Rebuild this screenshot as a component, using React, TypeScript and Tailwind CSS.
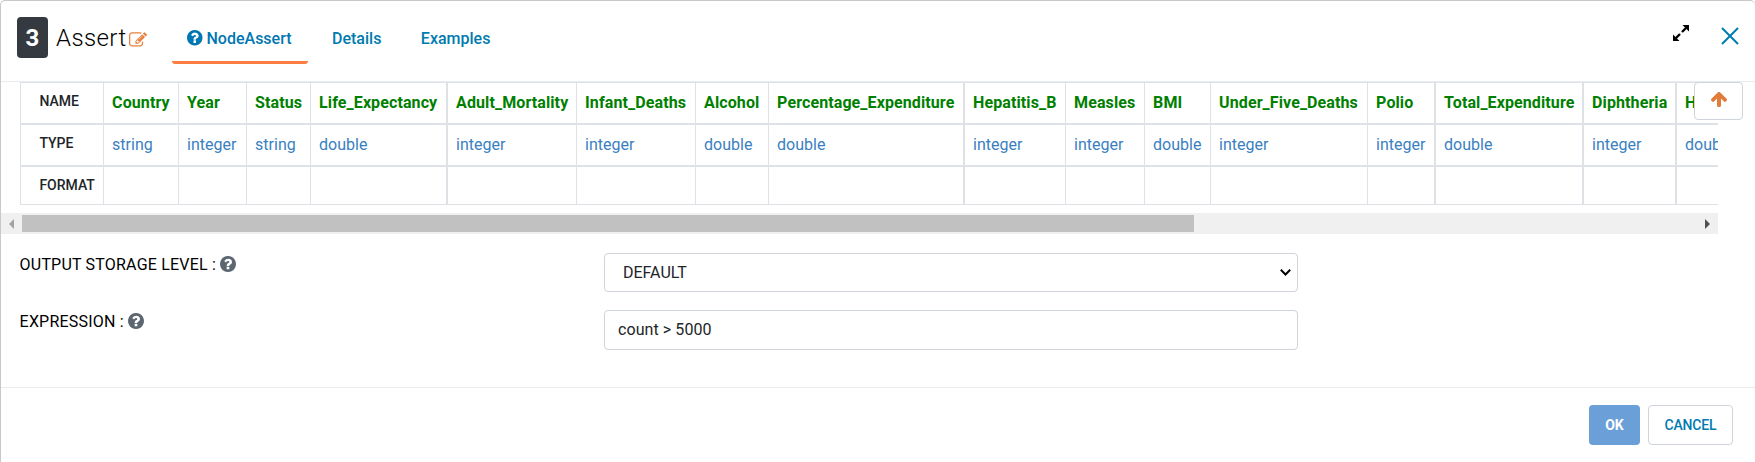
import React from "react";

type Column = { name: string; type: string; width: string };

const columns: Column[] = [
  { name: "Country", type: "string", width: "w-[75px] border-r" },
  { name: "Year", type: "integer", width: "w-[68px] border-r" },
  { name: "Status", type: "string", width: "w-[64px] border-r" },
  { name: "Life_Expectancy", type: "double", width: "w-[137px] border-r-2" },
  { name: "Adult_Mortality", type: "integer", width: "w-[129px] border-r" },
  { name: "Infant_Deaths", type: "integer", width: "w-[119px] border-r" },
  { name: "Alcohol", type: "double", width: "w-[73px] border-r" },
  { name: "Percentage_Expenditure", type: "double", width: "w-[196px] border-r-2" },
  { name: "Hepatitis_B", type: "integer", width: "w-[101px] border-r" },
  { name: "Measles", type: "integer", width: "w-[79px] border-r" },
  { name: "BMI", type: "double", width: "w-[66px] border-r" },
  { name: "Under_Five_Deaths", type: "integer", width: "w-[157px] border-r" },
  { name: "Polio", type: "integer", width: "w-[68px] border-r-2" },
  { name: "Total_Expenditure", type: "double", width: "w-[148px] border-r-2" },
  { name: "Diphtheria", type: "integer", width: "w-[93px] border-r-2" },
  { name: "HIV_AIDS", type: "double", width: "w-[90px] border-r" },
];

const rowLabel =
  "w-[84px] shrink-0 border-x border-[#dee2e6] pl-[18.4px] text-[14px] font-medium leading-5 text-[#212529]";
const cell = "shrink-0 border-[#dee2e6] pl-[8.1px] text-base leading-6 whitespace-nowrap";

function QuestionCircle({ className }: { className: string }) {
  return (
    <svg className={className} viewBox="128 128 1536 1536" fill="currentColor">
      <path d="M1024 1376v-192q0-14-9-23t-23-9h-192q-14 0-23 9t-9 23v192q0 14 9 23t23 9h192q14 0 23-9t9-23zm256-672q0-88-55.5-163t-138.5-116-170-41q-243 0-371 213-15 24 8 42l132 100q7 6 19 6 16 0 25-12 53-68 86-92 34-24 86-24 48 0 85.5 26t37.5 59q0 38-20 61t-68 45q-63 28-115.5 86.5t-52.5 125.5v36q0 14 9 23t23 9h192q14 0 23-9t9-23q0-19 21.5-49.5t54.5-49.5q32-18 49-28.5t46-35 44.5-48 28-60.5 12.5-81zm384 192q0 209-103 385.5t-279.5 279.5-385.5 103-385.5-103-279.5-279.5-103-385.5 103-385.5 279.5-279.5 385.5-103 385.5 103 279.5 279.5 103 385.5z" />
    </svg>
  );
}

function PencilSquare({ className }: { className: string }) {
  return (
    <svg className={className} viewBox="0 0 1792 1792" fill="currentColor">
      <path d="M888 1184l116-116-152-152-116 116v56h96v96h56zm440-720q-16-16-33 1l-350 350q-17 17-1 33t33-1l350-350q17-17 1-33zm80 594v190q0 119-84.5 203.5t-203.5 84.5h-832q-119 0-203.5-84.5t-84.5-203.5v-832q0-119 84.5-203.5t203.5-84.5h832q63 0 117 25 15 7 18 23 3 17-9 29l-49 49q-14 14-32 8-23-6-45-6h-832q-66 0-113 47t-47 113v832q0 66 47 113t113 47h832q66 0 113-47t47-113v-126q0-13 9-22l64-64q15-15 35-7t20 29zm-96-738l288 288-672 672h-288v-288zm444 132l-92 92-288-288 92-92q28-28 68-28t68 28l152 152q28 28 28 68t-28 68z" />
    </svg>
  );
}

function SchemaTable() {
  return (
    <div className="ml-5 w-[1698px] overflow-hidden">
      <div className="flex h-[43px] w-max border-t border-b-2 border-[#dee2e6]">
        <div className={`${rowLabel} pt-2`}>NAME</div>
        {columns.map((c) => (
          <div key={c.name} className={`${cell} ${c.width} pt-2 font-bold tracking-[0.1px] text-[#008000]`}>{c.name}</div>
        ))}
      </div>
      <div className="flex h-[42px] w-max border-b-2 border-[#dee2e6]">
        <div className={`${rowLabel} pt-2`}>TYPE</div>
        {columns.map((c) => (
          <div key={c.name} className={`${cell} ${c.width} pt-2 text-[#3a7fc1]`}>{c.type}</div>
        ))}
      </div>
      <div className="flex h-[38px] w-max border-b border-[#dee2e6]">
        <div className={`${rowLabel} pt-2`}>FORMAT</div>
        {columns.map((c) => (
          <div key={c.name} className={`${cell} ${c.width}`} />
        ))}
      </div>
    </div>
  );
}

function ScrollBar() {
  return (
    <div className="mt-2 flex h-[21px] w-[1717px] items-center justify-between bg-[#f0f0f0] pr-2">
      <div className="flex items-center">
        <svg className="ml-2 h-[10px] w-[5px]" viewBox="0 0 5 10"><path d="M5 0v10L0 5z" fill="#a3a3a3" /></svg>
        <div className="ml-2 h-[17px] w-[1172px] bg-[#c1c1c1]" />
      </div>
      <svg className="h-[10px] w-[5px]" viewBox="0 0 5 10"><path d="M0 0v10l5-5z" fill="#505050" /></svg>
    </div>
  );
}

function FieldLabel({ children }: { children: React.ReactNode }) {
  return (
    <div className="flex h-6 w-[584px] items-start pl-[0.6px] text-base leading-6 tracking-[0.2px] text-black">
      <span>{children}</span>
      <QuestionCircle className="mt-[3px] ml-1 size-4 text-[#5c6670]" />
    </div>
  );
}

export default function App() {
  return (
    <div className="h-[462px] w-full overflow-hidden rounded-t-[5px] border-t border-l border-[#c9c9c9] bg-white font-['Roboto',sans-serif] text-[#212529]">
      <header className="flex h-[81px] items-start border-b border-[#e9ecef]">
        <div className="mt-4 ml-4 flex h-[41px] w-[31px] items-center justify-center rounded bg-[#343a40] text-2xl font-bold text-white">3</div>
        <h1 className="mt-[21px] ml-2 w-[73px] text-2xl leading-8 font-light tracking-[0.4px] text-black">Assert</h1>
        <PencilSquare className="mt-[29.5px] size-[18px] text-[#e8803f]" />
        <nav className="ml-[25px] flex text-base leading-6 font-medium text-[#0077b3]">
          <a className="mt-[18px] flex h-[45px] w-[136px] items-start rounded-[3px] border-b-[3px] border-[#fd7e42] pt-2 pl-[15px]">
            <QuestionCircle className="mt-[3px] mr-1 size-[15.5px]" />NodeAssert
          </a>
          <a className="mt-[26px] ml-6 text-[#007bae]">Details</a>
          <a className="mt-[26px] ml-[39.5px] text-[#007bae]">Examples</a>
        </nav>
        <svg className="mt-6 mr-[32px] ml-auto size-4" viewBox="0 0 16 16" fill="none" stroke="#000" strokeWidth="2.4">
          <path d="M9 7l4-4M7 9l-4 4" /><path d="M9.5 0H16v6.5zM0 9.5V16h6.5z" fill="#000" stroke="none" />
        </svg>
        <svg className="mt-[26px] mr-[16px] size-[18px]" viewBox="0 0 18 18" fill="none" stroke="#007bb0" strokeWidth="2">
          <path d="M1 1l16 16M17 1L1 17" />
        </svg>
      </header>
      <main className="relative h-[305px]">
        <div className="-ml-px"><SchemaTable /></div>
        <ScrollBar />
        <button className="absolute top-0 left-[1693px] flex h-[38px] w-[49px] items-center justify-center rounded border border-[#ced4da] bg-white">
          <svg className="mb-1 h-[15px] w-4" viewBox="117 221 1558 1443" fill="#e07b39">
            <path d="M1675 971q0 51-37 90l-75 75q-38 38-91 38-54 0-90-38l-294-293v704q0 52-37.5 84.5t-90.5 32.5h-128q-53 0-90.5-32.5t-37.5-84.5v-704l-294 293q-36 38-90 38t-90-38l-75-75q-38-38-38-90 0-53 38-91l651-651q35-37 90-37 54 0 91 37l651 651q37 39 37 91z" />
          </svg>
        </button>
        <div className="ml-[18px] flex h-[57px] pt-[19px]">
          <FieldLabel>OUTPUT STORAGE LEVEL :</FieldLabel>
          <div className="ml-px flex h-[39px] w-[694px] items-center justify-between rounded border border-[#ced4da] pr-[6px] pl-[18px] text-base text-[#212529]">
            DEFAULT
            <svg className="h-[7px] w-[11px]" viewBox="0 0 11 7" fill="none" stroke="#000" strokeWidth="2"><path d="M.8.8l4.7 4.7L10.2.8" /></svg>
          </div>
        </div>
        <div className="ml-[18px] flex pt-[19px]">
          <FieldLabel>EXPRESSION :</FieldLabel>
          <input readOnly defaultValue="count > 5000" className="ml-px h-10 w-[694px] rounded border border-[#ced4da] px-[13px] pb-px text-base tracking-[0.08px] text-[#212529]" />
        </div>
      </main>
      <footer className="flex justify-end gap-2 border-t border-[#e9ecef] pt-[17px] pr-[22px] text-[14px]">
        <button className="h-10 w-[51px] rounded bg-[#6a9fd8] font-bold text-white">OK</button>
        <button className="h-10 w-[85px] rounded border border-[#ced4da] font-medium tracking-[-0.15px] text-[#007bb0]">CANCEL</button>
      </footer>
    </div>
  );
}
